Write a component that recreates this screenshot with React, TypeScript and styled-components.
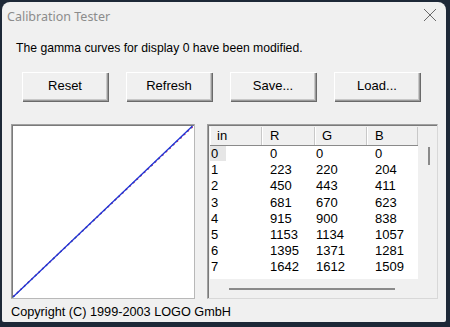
import React from "react";
import styled, { createGlobalStyle } from "styled-components";

const Global = createGlobalStyle`
  html, body { margin: 0; padding: 0; }
  body {
    background: #1d2837;
    width: 450px;
    height: 327px;
    overflow: hidden;
    font-family: "Liberation Sans", Arial, sans-serif;
  }
`;

const Window = styled.div`
  margin: 2px 0 0 2px;
  width: 444px;
  height: 320px;
  background: #f0f0f0;
  border-radius: 8px 8px 2px 2px;
  display: flex;
  flex-direction: column;
  box-sizing: border-box;
  overflow: hidden;
`;

const TitleBar = styled.div`
  height: 30px;
  display: flex;
  align-items: center;
  justify-content: space-between;
  padding: 0 9px 0 5px;
  box-sizing: border-box;
`;

const Title = styled.span`
  font-family: "Noto Sans", "Open Sans", sans-serif;
  font-size: 12.5px;
  color: #8c8c8c;
  margin-top: -2px;
`;

const CloseIcon = () => (
  <svg width="14" height="14" viewBox="0 0 14 14" style={{ marginTop: -4 }}>
    <path d="M1 1 L13 13 M13 1 L1 13" stroke="#6a6a6a" strokeWidth="1" fill="none" />
  </svg>
);

const Message = styled.div`
  font-size: 12.2px;
  color: #000;
  padding-left: 14px;
  margin-top: 9px;
  height: 15px;
  line-height: 15px;
`;

const ButtonRow = styled.div`
  display: flex;
  gap: 18px;
  padding-left: 20px;
  margin-top: 16px;
`;

const Button = styled.button`
  width: 86px;
  height: 29px;
  box-sizing: border-box;
  background: #f0f0f0;
  font-family: "Liberation Sans", Arial, sans-serif;
  font-size: 13px;
  color: #000;
  border: none;
  padding: 0 0 2px 0;
  box-shadow: inset 1px 1px 0 #ffffff, inset -1px -1px 0 #9a9a9a, inset -2px -2px 0 #c8c8c8, 1px 1px 0 #6a6a6a;
`;

const Panels = styled.div`
  display: flex;
  gap: 12px;
  padding-left: 9px;
  margin-top: 23px;
`;

const Chart = styled.div`
  width: 184px;
  height: 175px;
  box-sizing: border-box;
  border: 1px solid #a0a0a0;
  border-right-color: #b8b8b8;
  border-bottom-color: #b8b8b8;
  background: #fff;
  box-shadow: inset 1px 1px 0 #7a7a7a;
  position: relative;
`;

const TableBox = styled.div`
  width: 231px;
  height: 175px;
  box-sizing: border-box;
  border: 1px solid #a0a0a0;
  border-right-color: #d8d8d8;
  border-bottom-color: #d8d8d8;
  box-shadow: inset 1px 1px 0 #7a7a7a;
  padding: 2px 0 0 2px;
  display: grid;
  grid-template-columns: 208px 1fr;
  grid-template-rows: 1fr 19px;
  background: #f0f0f0;
`;

const TableMain = styled.div`
  display: flex;
  flex-direction: column;
  background: #fff;
`;

const HeaderRow = styled.div`
  display: flex;
  height: 18px;
  background: #f0f0f0;
  border-bottom: 1px solid #8a8a8a;
`;

const HeaderCell = styled.div<{ $w: number }>`
  width: ${(p) => p.$w}px;
  box-sizing: border-box;
  padding-left: ${(p) => (p.$w === 52 ? 6 : 7)}px;
  font-size: 13px;
  line-height: 18px;
  border-right: 1px solid #c8c8c8;
  border-left: 1px solid #fff;
`;

const Row = styled.div`
  display: flex;
  height: 16.2px;
  font-size: 13px;
  line-height: 16px;
`;

const Cell = styled.div<{ $w: number; $sel?: boolean }>`
  width: ${(p) => p.$w}px;
  box-sizing: border-box;
  padding-left: ${(p) => (p.$w === 52 ? 1 : 8)}px;
  span {
    background: ${(p) => (p.$sel ? "#e6e6e6" : "transparent")};
    padding-right: ${(p) => (p.$sel ? 8 : 0)}px;
    padding-left: ${(p) => (p.$sel ? 1 : 0)}px;
    margin-left: ${(p) => (p.$sel ? -1 : 0)}px;
  }
`;

const VScroll = styled.div`
  display: flex;
  justify-content: center;
  padding-top: 20px;
`;

const VThumb = styled.div`
  width: 2px;
  height: 18px;
  background: #8a8a8a;
  margin-left: 2px;
`;

const HScroll = styled.div`
  display: flex;
  align-items: center;
  padding-left: 19px;
`;

const HThumb = styled.div`
  width: 166px;
  height: 2px;
  background: #8a8a8a;
  margin-top: 1px;
`;

const Copyright = styled.div`
  font-size: 12.7px;
  padding-left: 9px;
  margin-top: 5px;
  line-height: 16px;
`;

const widths = [52, 53, 52, 51];
const data = [
  [0, 0, 0, 0],
  [1, 223, 220, 204],
  [2, 450, 443, 411],
  [3, 681, 670, 623],
  [4, 915, 900, 838],
  [5, 1153, 1134, 1057],
  [6, 1395, 1371, 1281],
  [7, 1642, 1612, 1509],
];

const Curve = () => (
  <svg width="182" height="173" viewBox="0 0 182 173" style={{ position: "absolute", left: 0, top: 0 }}>
    <line x1="1" y1="172" x2="181" y2="1" stroke="#1fa08a" strokeWidth="1.4" strokeDasharray="2 3" />
    <line x1="1.5" y1="171.3" x2="181" y2="1.5" stroke="#e0206a" strokeWidth="1.3" strokeDasharray="1.5 3.5" />
    <line x1="1" y1="172" x2="180.5" y2="1" stroke="#2232d8" strokeWidth="1.3" />
  </svg>
);

export default function App() {
  return (
    <>
      <Global />
      <Window>
        <TitleBar>
          <Title>Calibration Tester</Title>
          <CloseIcon />
        </TitleBar>
        <Message>The gamma curves for display 0 have been modified.</Message>
        <ButtonRow>
          <Button>Reset</Button>
          <Button>Refresh</Button>
          <Button>Save...</Button>
          <Button>Load...</Button>
        </ButtonRow>
        <Panels>
          <Chart>
            <Curve />
          </Chart>
          <TableBox>
            <TableMain>
              <HeaderRow>
                {["in", "R", "G", "B"].map((h, i) => (
                  <HeaderCell key={h} $w={widths[i]}>{h}</HeaderCell>
                ))}
              </HeaderRow>
              {data.map((r, ri) => (
                <Row key={ri}>
                  {r.map((v, ci) => (
                    <Cell key={ci} $w={widths[ci]} $sel={ri === 0 && ci === 0}>
                      <span>{v}</span>
                    </Cell>
                  ))}
                </Row>
              ))}
            </TableMain>
            <VScroll>
              <VThumb />
            </VScroll>
            <HScroll>
              <HThumb />
            </HScroll>
            <div />
          </TableBox>
        </Panels>
        <Copyright>Copyright (C) 1999-2003 LOGO GmbH</Copyright>
      </Window>
    </>
  );
}
